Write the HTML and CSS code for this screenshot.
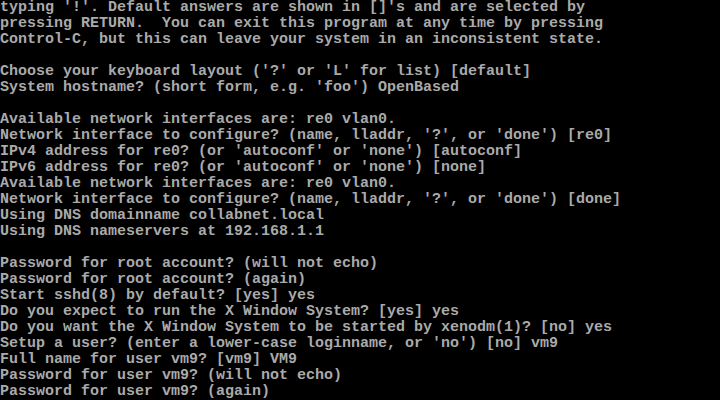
FILE: index.html
```html
<!DOCTYPE html>
<html>
<head>
<meta charset="utf-8">
<link rel="stylesheet" href="styles.css">
</head>
<body>
<pre class="console">typing '!'. Default answers are shown in []'s and are selected by
pressing RETURN.  You can exit this program at any time by pressing
Control-C, but this can leave your system in an inconsistent state.

Choose your keyboard layout ('?' or 'L' for list) [default]
System hostname? (short form, e.g. 'foo') OpenBased

Available network interfaces are: re0 vlan0.
Network interface to configure? (name, lladdr, '?', or 'done') [re0]
IPv4 address for re0? (or 'autoconf' or 'none') [autoconf]
IPv6 address for re0? (or 'autoconf' or 'none') [none]
Available network interfaces are: re0 vlan0.
Network interface to configure? (name, lladdr, '?', or 'done') [done]
Using DNS domainname collabnet.local
Using DNS nameservers at 192.168.1.1

Password for root account? (will not echo)
Password for root account? (again)
Start sshd(8) by default? [yes] yes
Do you expect to run the X Window System? [yes] yes
Do you want the X Window System to be started by xenodm(1)? [no] yes
Setup a user? (enter a lower-case loginname, or 'no') [no] vm9
Full name for user vm9? [vm9] VM9
Password for user vm9? (will not echo)
Password for user vm9? (again)</pre>
</body>
</html>
```
FILE: styles.css
```css
html, body {
  margin: 0;
  padding: 0;
  background: #000;
  width: 720px;
  height: 400px;
  overflow: hidden;
}
.console {
  margin: 0;
  padding: 0;
  font-family: "Liberation Mono", monospace;
  font-size: 15px;
  line-height: 16px;
  color: #aaaaaa;
  white-space: pre;
  font-weight: bold;
}
```
